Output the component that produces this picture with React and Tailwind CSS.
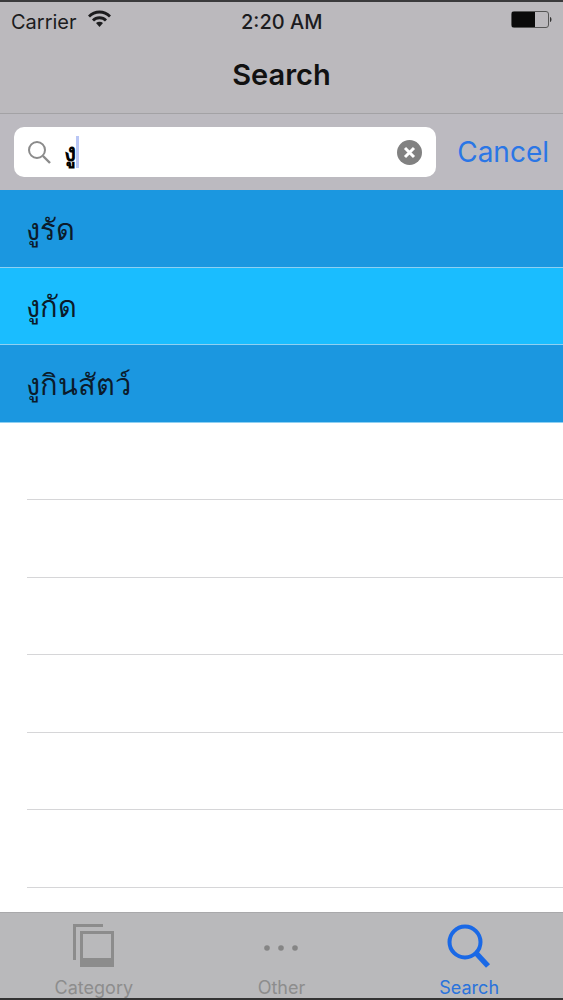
const results = [
  { label: "งูรัด", bg: "bg-[#1b97e0]" },
  { label: "งูกัด", bg: "bg-[#1abdff]" },
  { label: "งูกินสัตว์", bg: "bg-[#1b97e0]" },
];

const StatusBar = () => (
  <div className="relative flex h-[38px] items-center justify-between pl-[11px] pr-[10px] pt-[1px] text-[#1c1c1e]">
    <div className="flex items-center gap-[12px]">
      <span className="text-[20px] leading-none">Carrier</span>
      <svg width="23" height="18" viewBox="0 0 23 18" fill="none" className="mb-[5px] -ml-[1px]">
        <path d="M1 6.5 C7 0.5 16 0.5 22 6.5" stroke="#1c1c1e" strokeWidth="2.8" />
        <path d="M5 10.5 C8.5 6.8 14.5 6.8 18 10.5" stroke="#1c1c1e" strokeWidth="2.8" />
        <path d="M8 13 C10 11.4 13 11.4 15 13 L11.5 17 Z" fill="#1c1c1e" />
      </svg>
    </div>
    <span className="absolute left-[241px] text-[20px] font-medium leading-none">2:20 AM</span>
    <svg width="42" height="18" viewBox="0 0 42 18" fill="none" className="mb-[3px]">
      <rect x="0.5" y="0.5" width="37" height="16" rx="2.5" stroke="#555" />
      <rect x="1" y="1" width="23" height="15" fill="#0a0a0a" />
      <path d="M39 6 C41 6.5 41 10.5 39 11 Z" fill="#333" />
    </svg>
  </div>
);

const SearchField = () => (
  <div className="ml-[1px] flex h-[50px] flex-1 items-center rounded-[10px] bg-white pl-[13px] pr-[14px]">
    <svg width="24" height="24" viewBox="0 0 24 24" fill="none" stroke="#8b8b8b" strokeWidth="2">
      <circle cx="10" cy="10" r="8" />
      <path d="M16 16 L23 23" strokeWidth="2.4" />
    </svg>
    <span className="relative ml-[13px] flex h-[36px] flex-1 items-center">
      <span className="text-[25px] font-bold leading-none text-black">งู</span>
      <span className="h-[32px] w-[3px] bg-[#b9c6f5]" />
    </span>
    <svg width="25" height="25" viewBox="0 0 25 25">
      <circle cx="12.5" cy="12.5" r="12.5" fill="#818181" />
      <path d="M8 8 L17 17 M17 8 L8 17" stroke="#fff" strokeWidth="3" />
    </svg>
  </div>
);

const TabItem = ({ label, active, children }) => (
  <div className="flex h-full flex-col items-center justify-end">
    <div className="flex flex-1 items-center justify-center pt-[1px]">{children}</div>
    <span className={`text-[18px] leading-[21px] ${active ? "text-[#2a73dc]" : "text-[#8d8d8d]"}`}>{label}</span>
  </div>
);

export default function App() {
  return (
    <div className="flex h-[1000px] w-[563px] flex-col overflow-hidden bg-white font-['Inter','Liberation_Sans',sans-serif]">
      {/* header */}
      <div className="border-t-2 border-[#3a3a3c] bg-[#bbb9bd]">
        <StatusBar />
        <div className="flex h-[74px] items-center justify-center border-b border-[#a3a2a5] pb-[4px]">
          <h1 className="text-[29px] font-semibold leading-none text-[#111]">Search</h1>
        </div>
      </div>

      {/* search bar */}
      <div className="flex h-[76px] items-center gap-[21px] bg-[#bcbac0] pl-[13px] pr-[14px]">
        <SearchField />
        <span className="text-[28px] leading-none text-[#2a76e6]">Cancel</span>
      </div>

      {/* list */}
      <div className="flex-1">
        {results.map((r) => (
          <div
            key={r.label}
            className={`flex h-[77.5px] items-center border-b border-[#8fd0f2] pl-[26px] font-['Noto_Sans',sans-serif] text-[29px] font-medium text-[#0b1b2b] ${r.bg}`}
          >
            {r.label}
          </div>
        ))}
        {[0, 1, 2, 3, 4, 5].map((i) => (
          <div key={i} className="h-[77.5px] pl-[27px]">
            <div className="h-full border-b border-[#d6d6d8]" />
          </div>
        ))}
      </div>

      {/* tab bar */}
      <div className="grid h-[88px] grid-cols-3 border-t border-[#a9a9ab] border-b-2 border-b-[#333] bg-[#b9b9bb]">
        <TabItem label="Category">
          <svg width="41" height="43" viewBox="0 0 41 43" fill="none">
            <path d="M30 1.5 H1.5 V36" stroke="#8c8c8c" strokeWidth="3" fill="none" />
            <path d="M7 7 H41 V43 H7 Z M10 10 V34 H38 V10 Z" fill="#8c8c8c" fillRule="evenodd" />
          </svg>
        </TabItem>
        <TabItem label="Other">
          <svg width="36" height="8" viewBox="0 0 36 8" className="mt-[5px]">
            <circle cx="4" cy="4" r="2.8" fill="#858585" />
            <circle cx="18" cy="4" r="2.8" fill="#858585" />
            <circle cx="32" cy="4" r="2.8" fill="#858585" />
          </svg>
        </TabItem>
        <TabItem label="Search" active>
          <svg width="44" height="44" viewBox="0 0 44 44" fill="none" stroke="#1a69e6">
            <circle cx="18" cy="18" r="15.5" strokeWidth="4" />
            <path d="M29 29 L41 42" strokeWidth="5.5" />
          </svg>
        </TabItem>
      </div>
    </div>
  );
}
